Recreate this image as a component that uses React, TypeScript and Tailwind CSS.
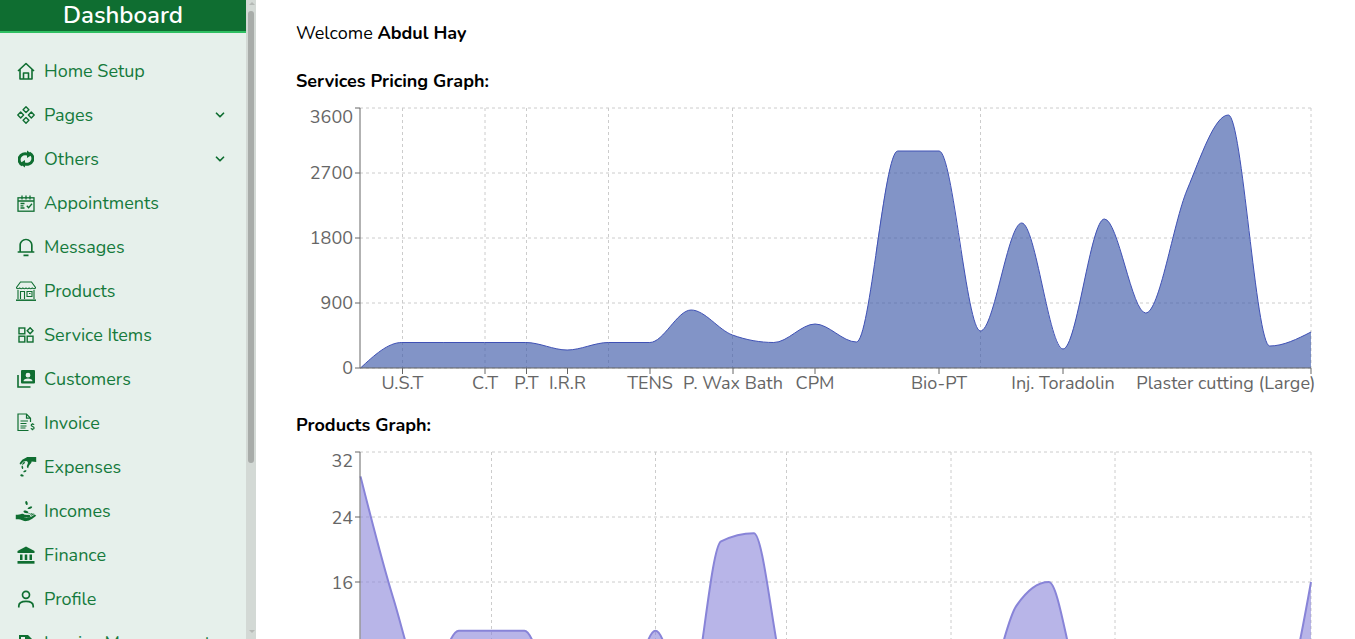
import { ChevronDown } from 'lucide-react'
import { GiPayMoney, GiReceiveMoney } from 'react-icons/gi'
import { RiNotification3Line } from 'react-icons/ri'

const font = "font-['Nunito','Lato','Noto_Sans',sans-serif]"

type IconProps = { className?: string }

const HomeIcon = ({ className }: IconProps) => (
  <svg viewBox="0 0 18 18" className={className} fill="none" stroke="currentColor" strokeWidth="1.6" strokeLinejoin="round">
    <path d="M1 9L9 1.5 17 9M3 7.5V17h12V7.5" />
    <path d="M6.5 17v-6h5v6" />
  </svg>
)

const PagesIcon = ({ className }: IconProps) => (
  <svg viewBox="0 0 18 18" className={className} fill="none" stroke="currentColor" strokeWidth="1.4" strokeLinejoin="round">
    <path d="M9 .8l2.900 2.900L9 6.600 6.100 3.700z" />
    <path d="M9 11.400l2.900 2.900L9 17.200l-2.900-2.900z" />
    <path d="M3.700 6.100L6.600 9l-2.900 2.900L.8 9z" />
    <path d="M14.300 6.100L17.200 9l-2.900 2.900L11.400 9z" />
  </svg>
)

const OthersIcon = ({ className }: IconProps) => (
  <svg viewBox="0 0 16 18" className={className} fill="currentColor">
    <path d="M9.500 4.200A5.800 5.800 0 0 0 4.600 15" fill="none" stroke="currentColor" strokeWidth="3" />
    <path d="M9 .5l5.500 4L9 8z" />
    <g transform="rotate(180 8 9)">
      <path d="M9.500 4.200A5.800 5.800 0 0 0 4.600 15" fill="none" stroke="currentColor" strokeWidth="3" />
      <path d="M9 .5l5.500 4L9 8z" />
    </g>
  </svg>
)

const CalendarIcon = ({ className }: IconProps) => (
  <svg viewBox="0 0 18 17" className={className} fill="none" stroke="currentColor" strokeWidth="1.3">
    <rect x="1" y="2.800" width="16" height="13.400" />
    <path d="M1 6h16M5 .5v4M9 .5v4M13 .5v4M3.500 8.500h4M3.500 10.800h3M3.500 13h4M9.800 10.800l1.800 1.900L15 8.800" />
  </svg>
)

const StoreIcon = ({ className }: IconProps) => (
  <svg viewBox="0 0 20 20" className={className} fill="none" stroke="currentColor" strokeWidth="1.1">
    <path d="M4.500 1h11l4 5.500c0 1.600-3 1.600-3.200 0 0 1.600-3.100 1.600-3.200 0 0 1.600-3.100 1.600-3.100 0 0 1.600-3.100 1.600-3.200 0 0 1.600-3.100 1.600-3.200 0 0 1.600-3.100 1.600-3.100 0z" />
    <path d="M2 9v9M18 9v9M4.500 18v-7.500h4V18M11 10.500h5v5h-5zM13 12.500h1.500" />
    <path d="M0 19.200h20" strokeWidth="1.500" />
  </svg>
)

const ServiceIcon = ({ className }: IconProps) => (
  <svg viewBox="0 0 16 16" className={className} fill="none" stroke="currentColor" strokeWidth="1.4">
    <rect x="1" y="1" width="5.800" height="5.800" />
    <rect x="1" y="9.200" width="5.800" height="5.800" />
    <rect x="9.200" y="9.200" width="5.800" height="5.800" />
    <path d="M12.100.8l2.900 3-2.900 3-2.900-3z" />
  </svg>
)

const CustomersIcon = ({ className }: IconProps) => (
  <svg viewBox="0 0 18 18" className={className}>
    <path fillRule="evenodd" fill="currentColor" d="M5 0h12a1 1 0 0 1 1 1v11.500a1 1 0 0 1-1 1H5a1 1 0 0 1-1-1V1a1 1 0 0 1 1-1zm6 2.800a2.400 2.400 0 1 0 0 4.800 2.400 2.400 0 0 0 0-4.800zM6.500 11.200h9c0-1.800-2-2.700-4.500-2.700s-4.500.9-4.500 2.700z" />
    <path d="M1 5v12h12.500" fill="none" stroke="currentColor" strokeWidth="1.600" />
  </svg>
)

const InvoiceIcon = ({ className }: IconProps) => (
  <svg viewBox="0 0 18 20" className={className} fill="none" stroke="currentColor" strokeWidth="1.200">
    <path d="M11.500 17.500H1V1h8.500l4 4.200V9M9.500 1v4.200h4" />
    <path d="M3.500 8h7.500M3.500 10.500h6M3.500 13h6M3.500 15h5" />
    <path d="M17 11.800c-.3-.8-2.800-1-2.800.5s2.900 1 2.900 2.600-2.700 1.500-3.100.4M15.500 10.200v1M15.500 16v1.200" />
  </svg>
)

const FinanceIcon = ({ className }: IconProps) => (
  <svg viewBox="0 0 18 18" className={className} fill="currentColor">
    <path d="M9 .5L17.500 5v2H.5V5z" />
    <rect x="3" y="8.500" width="2.500" height="5.500" />
    <rect x="7.750" y="8.500" width="2.500" height="5.500" />
    <rect x="12.500" y="8.500" width="2.500" height="5.500" />
    <rect x=".5" y="15" width="17" height="2.700" />
  </svg>
)

const ProfileIcon = ({ className }: IconProps) => (
  <svg viewBox="0 0 18 18" className={className} fill="none" stroke="currentColor" strokeWidth="1.700">
    <circle cx="9" cy="4.800" r="3.500" />
    <path d="M1.800 17.500V16c0-3 3-4.700 7.200-4.700s7.200 1.700 7.200 4.700v1.500" />
  </svg>
)

const ManageIcon = ({ className }: IconProps) => (
  <svg viewBox="0 0 18 18" className={className} fill="currentColor">
    <path fillRule="evenodd" d="M2 1h9l5 5v11H2zm2 2v3h4V3z" />
  </svg>
)

const items = [
  { label: 'Home Setup', icon: HomeIcon, size: 'w-[18px] h-[18px]' },
  { label: 'Pages', icon: PagesIcon, size: 'w-[18px] h-[18px]', arrow: true },
  { label: 'Others', icon: OthersIcon, size: 'w-[16px] h-[18px]', arrow: true },
  { label: 'Appointments', icon: CalendarIcon, size: 'w-[18px] h-[17px]' },
  { label: 'Messages', icon: RiNotification3Line, size: 'w-[20px] h-[20px]' },
  { label: 'Products', icon: StoreIcon, size: 'w-[20px] h-[20px]' },
  { label: 'Service Items', icon: ServiceIcon, size: 'w-[16px] h-[16px]' },
  { label: 'Customers', icon: CustomersIcon, size: 'w-[18px] h-[18px]' },
  { label: 'Invoice', icon: InvoiceIcon, size: 'w-[18px] h-[20px]' },
  { label: 'Expenses', icon: GiPayMoney, size: 'w-[22px] h-[22px]' },
  { label: 'Incomes', icon: GiReceiveMoney, size: 'w-[22px] h-[22px]' },
  { label: 'Finance', icon: FinanceIcon, size: 'w-[18px] h-[18px]' },
  { label: 'Profile', icon: ProfileIcon, size: 'w-[18px] h-[18px]' },
  { label: 'Invoice Management', icon: ManageIcon, size: 'w-[18px] h-[18px]' },
]

// same curve the chart lib uses (monotone x)
function monotonePath(pts: number[][]) {
  const n = pts.length
  const dx: number[] = []
  const m: number[] = []
  for (let i = 0; i < n - 1; i++) {
    dx[i] = pts[i + 1][0] - pts[i][0]
    m[i] = (pts[i + 1][1] - pts[i][1]) / dx[i]
  }
  const t: number[] = [m[0]]
  for (let i = 1; i < n - 1; i++) {
    if (m[i - 1] * m[i] <= 0) t[i] = 0
    else {
      const p = (m[i - 1] * dx[i] + m[i] * dx[i - 1]) / (dx[i - 1] + dx[i])
      t[i] = (Math.sign(m[i - 1]) + Math.sign(m[i])) * Math.min(Math.abs(m[i - 1]), Math.abs(m[i]), 0.5 * Math.abs(p))
    }
  }
  t[0] = (3 * m[0] - t[1]) / 2
  t[n - 1] = (3 * m[n - 2] - t[n - 2]) / 2
  let d = `M${pts[0][0]},${pts[0][1]}`
  for (let i = 0; i < n - 1; i++) {
    const h = dx[i] / 3
    d += `C${pts[i][0] + h},${pts[i][1] + h * t[i]} ${pts[i + 1][0] - h},${pts[i + 1][1] - h * t[i + 1]} ${pts[i + 1][0]},${pts[i + 1][1]}`
  }
  return d
}

const serviceYs = [368, 342.5, 342.5, 342.5, 342.5, 350, 342.5, 342.5, 310, 335, 342.5, 324, 342, 151, 151, 331, 223, 349, 219, 313, 190, 115, 346, 332]
const servicePts = serviceYs.map((y, i) => [360.5 + (i * 950.5) / 23, y])
const serviceLine = monotonePath(servicePts)

const productVals = [29, 14, 3, 10, 10, 10, 2, 2, 1, 10, 1, 21, 22, 4, 2, 1, 1, 1, 1, 2, 13, 16, 3, 1, 1, 1, 1, 1, 1, 16]
const productPts = productVals.map((v, i) => [360.5 + (i * 950.5) / 29, 712 - v * 8.125])
const productLine = monotonePath(productPts)

const serviceTicks: [string, number][] = [
  ['U.S.T', 402.5], ['C.T', 485], ['P.T', 526.5], ['I.R.R', 567.5], ['TENS', 650], ['P. Wax Bath', 733],
  ['CPM', 815], ['Bio-PT', 939], ['Inj. Toradolin', 1063],
]

const Grid = ({ ys, xs }: { ys: number[]; xs: number[] }) => (
  <g stroke="#ccc" strokeDasharray="3 3" fill="none">
    {ys.map(y => <line key={y} x1="360" x2="1311" y1={y} y2={y} />)}
    {xs.map(x => <line key={x} x1={x} x2={x} y1={ys[0]} y2={ys[ys.length - 1]} />)}
  </g>
)

export default function App() {
  return (
    <div className={`h-screen w-full overflow-hidden flex bg-white ${font}`}>
      <aside className="w-[256px] h-full flex shrink-0 bg-[#e6f0eb]">
        <div className="w-[246px] h-full overflow-hidden">
          <div className="h-[33px] bg-[#0f6e31] border-b-2 border-[#2fbf62] text-white text-center text-[24px] font-semibold leading-[30px]">
            Dashboard
          </div>
          <ul className="pt-[16px] pl-[17px] pr-[17px]">
            {items.map(item => {
              const Icon = item.icon
              return (
                <li key={item.label} className="h-[44px] flex items-center text-[#157a3c] text-[18px]">
                  <span className="w-[18px] h-[18px] mr-[9px] flex items-center justify-center text-[#0f6e31]">
                    <Icon className={`${item.size} shrink-0`} />
                  </span>
                  <span className="flex-1 whitespace-nowrap">{item.label}</span>
                  {item.arrow && <ChevronDown className="w-[14px] h-[14px] mr-[2px] text-[#0f6e31]" strokeWidth={3} />}
                </li>
              )
            })}
          </ul>
        </div>
        <div className="w-[10px] h-full bg-[#d3d9d5] flex flex-col justify-between pl-[2px]">
          <div>
            <div className="w-[7px] h-[11px] flex justify-center pt-[2px]">
              <div className="w-0 h-0 border-x-[3px] border-x-transparent border-b-[3px] border-b-[#b5b9b6]" />
            </div>
            <div className="w-[6px] h-[452px] bg-[#a8aca9] rounded-[3px]" />
          </div>
          <div className="w-[7px] h-[9px] flex justify-center">
            <div className="w-0 h-0 border-x-[3px] border-x-transparent border-t-[3px] border-t-[#b5b9b6]" />
          </div>
        </div>
      </aside>

      <main className="flex-1 min-w-0 pl-[40px] pt-[22px] text-black">
        <p className="text-[18px] leading-[22px]">Welcome <b>Abdul Hay</b></p>
        <h2 className="mt-[26px] text-[18px] leading-[22px] font-bold">Services Pricing Graph:</h2>
        <svg className="block" width="1059" height="306" viewBox="296 92 1059 306">
          <Grid ys={[108, 173, 238, 303, 368]} xs={[402.5, 485, 526.5, 608.5, 732.5, 980.5, 1311]} />
          <path d={`${serviceLine}L1311,368L360.5,368Z`} fill="#3f5ba9" fillOpacity="0.65" />
          <path d={serviceLine} fill="none" stroke="#3f51b5" strokeWidth="1" />
          <g stroke="#666" fill="none">
            <line x1="360" x2="360" y1="108" y2="368" />
            <line x1="360" x2="1311" y1="368" y2="368" />
            {[108, 173, 238, 303, 368].map(y => <line key={y} x1="355" x2="360" y1={y} y2={y} />)}
            {[...serviceTicks.map(t => t[1]), 1311].map(x => <line key={x} x1={x} x2={x} y1="368" y2="374" />)}
          </g>
          <g fill="#666" fontSize="18" textAnchor="end">
            {[['3600', 123], ['2700', 179], ['1800', 244], ['900', 309], ['0', 374]].map(([t, y]) => (
              <text key={t} x="353" y={y}>{t}</text>
            ))}
          </g>
          <g fill="#666" fontSize="18" textAnchor="middle">
            {serviceTicks.map(([t, x]) => <text key={t} x={x} y="389">{t}</text>)}
            <text x="1315.500" y="389" textAnchor="end">Plaster cutting (Large)</text>
          </g>
        </svg>
        <h2 className="mt-[16px] text-[18px] leading-[22px] font-bold">Products Graph:</h2>
        <svg className="block" width="1059" height="300" viewBox="296 436 1059 300">
          <Grid ys={[452, 517, 582, 647, 712]} xs={[491.5, 655.5, 786.5, 951, 1115, 1311]} />
          <path d={`${productLine}L1311,712L360.5,712Z`} fill="#8884d8" fillOpacity="0.6" />
          <path d={productLine} fill="none" stroke="#8884d8" strokeWidth="2" />
          <g stroke="#666" fill="none">
            <line x1="360" x2="360" y1="452" y2="712" />
            {[452, 517, 582, 647].map(y => <line key={y} x1="355" x2="360" y1={y} y2={y} />)}
          </g>
          <g fill="#666" fontSize="18" textAnchor="end">
            {[['32', 467], ['24', 524], ['16', 589]].map(([t, y]) => (
              <text key={t} x="353" y={y}>{t}</text>
            ))}
          </g>
        </svg>
      </main>
    </div>
  )
}
